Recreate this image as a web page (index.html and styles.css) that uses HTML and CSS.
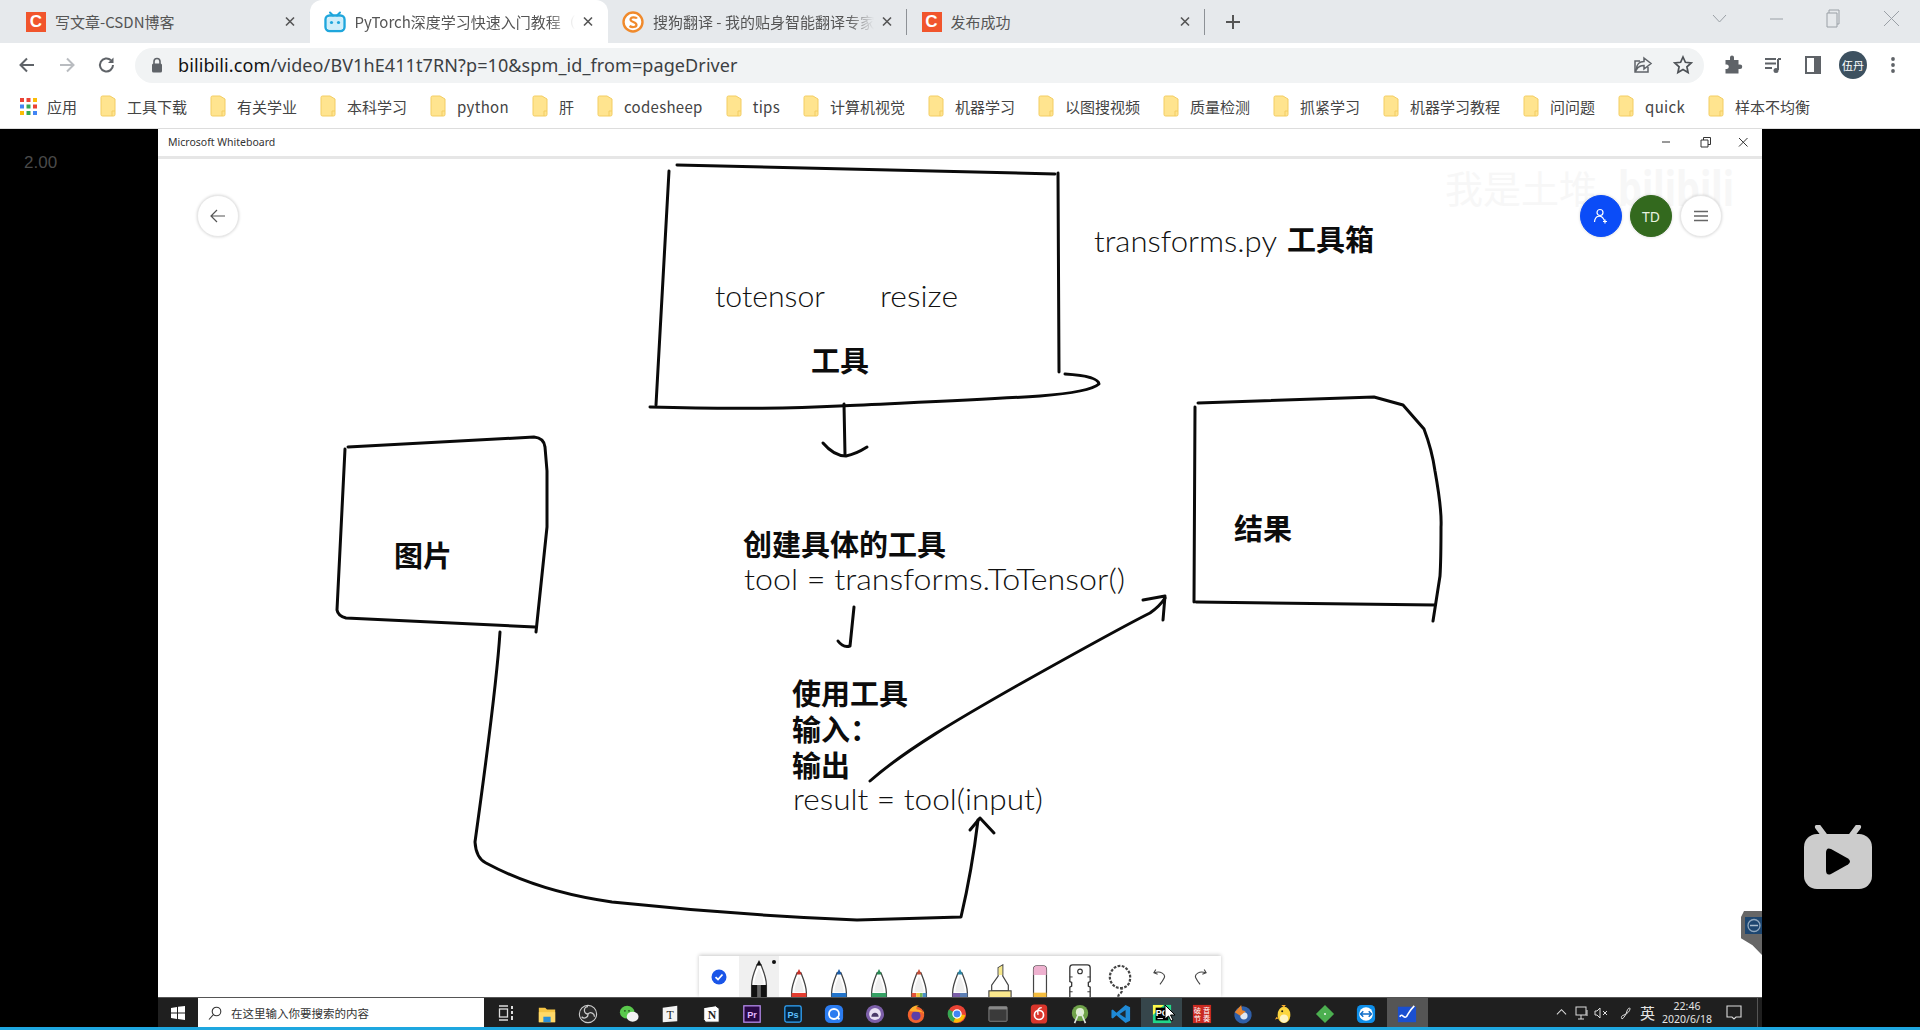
FILE: index.html
```html
<!DOCTYPE html>
<html lang="zh-CN">
<head>
<meta charset="utf-8">
<title>PyTorch深度学习快速入门教程</title>
<link rel="stylesheet" href="styles.css">
</head>
<body>
<svg class="defs" width="0" height="0">
  <defs>
    <symbol id="pen-body" viewBox="0 0 20 40">
      <path d="M2 40V27C2 19 6 10 8 5h4c2 5 6 14 6 22v13z" fill="#fff" stroke="#444" stroke-width="1.4"/>
      <path d="M5 26c0-6 3-13 5-17 2 4 5 11 5 17z" fill="#efefef"/>
    </symbol>
    <symbol id="folder" viewBox="0 0 16 22">
      <path d="M1 2.5A1.5 1.5 0 0 1 2.500 1H10l5 3v15.500a1.500 1.500 0 0 1-1.500 1.500h-11A1.500 1.500 0 0 1 1 19.500z" fill="#ffe48f" stroke="#f3cd63"/>
      <path d="M12 21v-5h3" fill="none" stroke="#f3cd63"/>
    </symbol>
  </defs>
</svg>

<header class="chrome">
  <div class="tabstrip">
    <div class="tab">
      <span class="fav fav-csdn">C</span>
      <span class="tab-title">写文章-CSDN博客</span>
      <svg class="tab-x" viewBox="0 0 10 10"><path d="M1 1l8 8M9 1l-8 8"/></svg>
    </div>
    <div class="tab tab-active">
      <svg class="fav-svg" viewBox="0 0 22 22"><path d="M6 1.500l3 3M16 1.500l-3 3" stroke="#1fa6dc" stroke-width="2" stroke-linecap="round"/><rect x="1.500" y="4.500" width="19" height="15.500" rx="4" fill="none" stroke="#1fa6dc" stroke-width="2.400"/><rect x="3" y="6" width="16" height="12.500" rx="3" fill="#cfeefa"/><circle cx="7.500" cy="11.500" r="1.600" fill="#1fa6dc"/><circle cx="14.500" cy="11.500" r="1.600" fill="#1fa6dc"/></svg>
      <span class="tab-title tab-fade">PyTorch深度学习快速入门教程（</span>
      <svg class="tab-x" viewBox="0 0 10 10"><path d="M1 1l8 8M9 1l-8 8"/></svg>
    </div>
    <div class="tab tab-sep">
      <svg class="fav-svg" viewBox="0 0 22 22"><circle cx="11" cy="11" r="9.500" fill="#fff" stroke="#f08a2c" stroke-width="2.400"/><path d="M15 7.500c-1-1.500-6.500-2-6.500 1 0 3 6 2 6 5.500 0 2.500-5 2.500-7 1" fill="none" stroke="#f08a2c" stroke-width="2.200"/></svg>
      <span class="tab-title tab-fade">搜狗翻译 - 我的贴身智能翻译专家</span>
      <svg class="tab-x" viewBox="0 0 10 10"><path d="M1 1l8 8M9 1l-8 8"/></svg>
    </div>
    <div class="tab tab-sep">
      <span class="fav fav-csdn">C</span>
      <span class="tab-title">发布成功</span>
      <svg class="tab-x" viewBox="0 0 10 10"><path d="M1 1l8 8M9 1l-8 8"/></svg>
    </div>
    <svg class="newtab" viewBox="0 0 16 16"><path d="M8 1v14M1 8h14"/></svg>
    <svg class="winctl" viewBox="1710 0 190 43">
      <path d="M1713 15l6.500 7 6.500-7M1770 19h13M1827 13v14h10V13zM1829 13v-3h10v14h-2M1884 11l15 15M1899 11l-15 15" fill="none" stroke="#9aa0a6" stroke-width="1"/>
    </svg>
  </div>

  <div class="toolbar">
    <div class="nav">
      <svg class="nav-ic" viewBox="0 0 20 20"><path d="M17 10H4M10 3.500L3.500 10l6.500 6.500" fill="none" stroke="#5f6368" stroke-width="2"/></svg>
      <svg class="nav-ic" viewBox="0 0 20 20"><path d="M3 10h13M10 3.500l6.500 6.500-6.500 6.500" fill="none" stroke="#b9bcc0" stroke-width="2"/></svg>
      <svg class="nav-ic" viewBox="0 0 20 20"><path d="M16 10a6.500 6.500 0 1 1-2-4.700" fill="none" stroke="#5f6368" stroke-width="2"/><path d="M16.500 2.500v5.500H11z" fill="#5f6368"/></svg>
    </div>
    <div class="omnibox">
      <svg class="lock" viewBox="0 0 12 16"><path d="M3 7V4.500a3 3 0 0 1 6 0V7" fill="none" stroke="#5f6368" stroke-width="1.600"/><rect x="1" y="6.500" width="10" height="9" rx="1.500" fill="#5f6368"/></svg>
      <span class="url"><b>bilibili.com</b>/video/BV1hE411t7RN?p=10&amp;spm_id_from=pageDriver</span>
      <svg class="omni-ic" viewBox="0 0 20 20"><path d="M11 3l7 5.500-7 5.500v-3.500c-4 0-6 1.500-7.500 4 0-5 3-8 7.500-8zM15 12v5H2V6h5" fill="none" stroke="#5f6368" stroke-width="1.500"/></svg>
      <svg class="omni-ic" viewBox="0 0 20 20"><path d="M10 2l2.400 5.300 5.800.6-4.300 3.900 1.200 5.700-5.100-2.900-5.100 2.900 1.200-5.700L1.800 7.900l5.800-.6z" fill="none" stroke="#4d5156" stroke-width="1.700"/></svg>
    </div>
    <div class="tools">
      <svg class="tool-ic" viewBox="0 0 20 20"><path d="M7 2.500a2 2 0 0 1 4 0V5h4.500v4.500h1.500a2.200 2.200 0 0 1 0 4.500h-1.500v4.500H2.500V14h1.500a2.300 2.300 0 0 0 0-4.500H2.500V5H7z" fill="#5f6368"/></svg>
      <svg class="tool-ic" viewBox="0 0 20 20"><path d="M2 4h11M2 8.500h11M2 13h7" stroke="#5f6368" stroke-width="2"/><path d="M15 4v11" stroke="#5f6368" stroke-width="2"/><path d="M15 4h3" stroke="#5f6368" stroke-width="2"/><circle cx="13" cy="15.500" r="2.500" fill="#5f6368"/></svg>
      <svg class="tool-ic" viewBox="0 0 20 20"><rect x="3" y="2" width="14" height="16" fill="none" stroke="#5f6368" stroke-width="2"/><rect x="11" y="2" width="6" height="16" fill="#5f6368"/></svg>
      <span class="avatar">伍丹</span>
      <svg class="tool-ic" viewBox="0 0 20 20"><circle cx="10" cy="4" r="1.900" fill="#5f6368"/><circle cx="10" cy="10" r="1.900" fill="#5f6368"/><circle cx="10" cy="16" r="1.900" fill="#5f6368"/></svg>
    </div>
  </div>

  <nav class="bookmarks">
    <div class="bm">
      <svg class="apps" viewBox="0 0 17 17">
        <rect x="0" y="0" width="4" height="4" fill="#ea4335"/><rect x="6.500" y="0" width="4" height="4" fill="#ea4335"/><rect x="13" y="0" width="4" height="4" fill="#fbbc05"/>
        <rect x="0" y="6.500" width="4" height="4" fill="#4285f4"/><rect x="6.500" y="6.500" width="4" height="4" fill="#34a853"/><rect x="13" y="6.500" width="4" height="4" fill="#ea4335"/>
        <rect x="0" y="13" width="4" height="4" fill="#fbbc05"/><rect x="6.500" y="13" width="4" height="4" fill="#34a853"/><rect x="13" y="13" width="4" height="4" fill="#4285f4"/>
      </svg>
      <span>应用</span>
    </div>
    <div class="bm"><svg class="fold"><use href="#folder"/></svg><span>工具下载</span></div>
    <div class="bm"><svg class="fold"><use href="#folder"/></svg><span>有关学业</span></div>
    <div class="bm"><svg class="fold"><use href="#folder"/></svg><span>本科学习</span></div>
    <div class="bm"><svg class="fold"><use href="#folder"/></svg><span class="lat">python</span></div>
    <div class="bm"><svg class="fold"><use href="#folder"/></svg><span>肝</span></div>
    <div class="bm"><svg class="fold"><use href="#folder"/></svg><span class="lat">codesheep</span></div>
    <div class="bm"><svg class="fold"><use href="#folder"/></svg><span class="lat">tips</span></div>
    <div class="bm"><svg class="fold"><use href="#folder"/></svg><span>计算机视觉</span></div>
    <div class="bm"><svg class="fold"><use href="#folder"/></svg><span>机器学习</span></div>
    <div class="bm"><svg class="fold"><use href="#folder"/></svg><span>以图搜视频</span></div>
    <div class="bm"><svg class="fold"><use href="#folder"/></svg><span>质量检测</span></div>
    <div class="bm"><svg class="fold"><use href="#folder"/></svg><span>抓紧学习</span></div>
    <div class="bm"><svg class="fold"><use href="#folder"/></svg><span>机器学习教程</span></div>
    <div class="bm"><svg class="fold"><use href="#folder"/></svg><span>问问题</span></div>
    <div class="bm"><svg class="fold"><use href="#folder"/></svg><span class="lat">quick</span></div>
    <div class="bm"><svg class="fold"><use href="#folder"/></svg><span>样本不均衡</span></div>
  </nav>
</header>

<main class="video">
  <aside class="side side-left"><span class="speed">2.00</span></aside>

  <section class="screen">
    <div class="wb-title">
      <span class="wb-name">Microsoft Whiteboard</span>
      <svg class="wb-ctl" viewBox="1650 129 112 27">
        <path d="M1662 142h8M1701 140h7v7h-7zM1703.500 140v-2.500h7v7h-2.500M1739 138l8.500 8.500M1747.500 138l-8.500 8.500" fill="none" stroke="#333" stroke-width="1"/>
      </svg>
    </div>

    <div class="canvas">
      <svg class="board" viewBox="158 159 1604 838">
        <!-- watermark -->
        <text class="mark" x="1445" y="203">我是土堆</text>
        <text class="mark mark-b" x="1618" y="206" textLength="116" lengthAdjust="spacingAndGlyphs">bilibili</text>

        <!-- tool box -->
        <g class="ink">
          <path d="M677 165L1055 174"/>
          <path d="M1058 173L1059 372"/>
          <path d="M669 171L656 405"/>
          <path d="M650 407Q760 410 839 406C900 403 980 400 1040 396Q1090 392 1099 384Q1098 376 1065 374"/>
          <path d="M844 404L845 455"/>
          <path d="M823 443Q834 456 846 456Q856 454 867 447"/>

          <!-- left box -->
          <path d="M348 447L534 437Q544 438 545 447L547 471L547 527L536 632"/>
          <path d="M345 449L337 610Q338 616 346 618L535 627"/>
          <path d="M500 632C497 680 485 770 475 842Q476 858 486 863Q540 892 612 902Q735 915 857 920L961 917Q972 870 978 820"/>
          <path d="M970 830L980 818L994 833"/>

          <!-- right box -->
          <path d="M1198 403L1374 397L1403 405L1424 429Q1432 450 1435 471Q1442 510 1441 527Q1441 560 1440 576L1433 621"/>
          <path d="M1195 407L1194 602"/>
          <path d="M1196 602L1435 605"/>

          <!-- arrows -->
          <path d="M854 607L850 646Q843 648 838 641"/>
          <path d="M870 781C905 750 960 718 1020 684C1070 656 1120 628 1150 613Q1160 606 1165 598"/>
          <path d="M1143 600L1165 596L1163 620"/>
        </g>

        <text class="hand" x="1094" y="252" textLength="183" lengthAdjust="spacingAndGlyphs">transforms.py</text>
        <text class="cn" x="1287" y="251">工具箱</text>
        <text class="hand" x="715" y="307" textLength="110" lengthAdjust="spacingAndGlyphs">totensor</text>
        <text class="hand" x="880" y="307" textLength="78" lengthAdjust="spacingAndGlyphs">resize</text>
        <text class="cn" x="811" y="372">工具</text>
        <text class="cn" x="394" y="567">图片</text>
        <text class="cn" x="1234" y="540">结果</text>
        <text class="cn" x="743" y="556">创建具体的工具</text>
        <text class="hand" x="744" y="590" textLength="381" lengthAdjust="spacingAndGlyphs">tool = transforms.ToTensor()</text>
        <text class="cn" x="792" y="705">使用工具</text>
        <text class="cn" x="792" y="741">输入：</text>
        <text class="cn" x="792" y="777">输出</text>
        <text class="hand" x="793" y="810" textLength="250" lengthAdjust="spacingAndGlyphs">result = tool(input)</text>
      </svg>

      <button class="round round-back">
        <svg class="round-ic" viewBox="0 0 16 16"><path d="M15 8H1M7 2L1 8l6 6" fill="none" stroke="#555" stroke-width="1.200"/></svg>
      </button>
      <div class="round-group">
        <span class="round round-blue">
          <svg class="round-ic" viewBox="0 0 16 16"><circle cx="7" cy="4.500" r="3" fill="none" stroke="#fff" stroke-width="1.200"/><path d="M1.500 14c.5-6 5-7 8-4.500l2 3M12 11.500v4M10 13.500h4" fill="none" stroke="#fff" stroke-width="1.200"/></svg>
        </span>
        <span class="round round-green">TD</span>
        <span class="round round-menu">
          <svg class="round-ic" viewBox="0 0 16 16"><path d="M1 3.500h14M1 8h14M1 12.500h14" stroke="#666" stroke-width="1.400"/></svg>
        </span>
      </div>

      <div class="tv-tab">
        <svg class="tv-ic" viewBox="0 0 17 17"><rect width="17" height="17" fill="#1d4670"/><circle cx="9" cy="8.500" r="6" fill="none" stroke="#8fa6bc" stroke-width="1.300"/><path d="M5 8.500h8" stroke="#a9bbcc" stroke-width="1.400"/></svg>
      </div>

      <div class="pens">
        <svg class="p-check" viewBox="0 0 16 16"><circle cx="8" cy="8" r="7.500" fill="#1a55e8"/><path d="M4.500 8.200l2.500 2.300 4.500-5" fill="none" stroke="#fff" stroke-width="1.800"/></svg>
        <div class="p-slot p-active">
          <svg class="pen" viewBox="0 0 20 40"><use href="#pen-body"/><path d="M10 0l3 6H7z" fill="#111"/><rect x="2" y="27" width="16" height="13" fill="#111"/><rect x="8" y="27" width="4" height="13" fill="#666"/></svg>
          <i class="p-dot"></i>
        </div>
        <div class="p-slot"><svg class="pen pen-low" viewBox="0 0 20 40"><use href="#pen-body"/><path d="M10 1l3 6H7z" fill="#c8322a"/><rect x="2" y="27" width="16" height="13" fill="#e43d30"/></svg></div>
        <div class="p-slot"><svg class="pen pen-low" viewBox="0 0 20 40"><use href="#pen-body"/><path d="M10 1l3 6H7z" fill="#1d5ea8"/><rect x="2" y="27" width="16" height="13" fill="#2375cc"/></svg></div>
        <div class="p-slot"><svg class="pen pen-low" viewBox="0 0 20 40"><use href="#pen-body"/><path d="M10 1l3 6H7z" fill="#2a8a55"/><rect x="2" y="27" width="16" height="13" fill="#36a265"/></svg></div>
        <div class="p-slot"><svg class="pen pen-low" viewBox="0 0 20 40"><use href="#pen-body"/><path d="M10 1l3 6H7z" fill="#c4503a"/><rect x="2" y="27" width="5" height="13" fill="#e5533a"/><rect x="7" y="27" width="4" height="13" fill="#f3c440"/><rect x="11" y="27" width="3" height="13" fill="#76b852"/><rect x="14" y="27" width="4" height="13" fill="#4a90c8"/></svg></div>
        <div class="p-slot"><svg class="pen pen-low" viewBox="0 0 20 40"><use href="#pen-body"/><path d="M10 1l3 6H7z" fill="#2d88a8"/><rect x="2" y="27" width="8" height="13" fill="#7b5ea8"/><rect x="10" y="27" width="8" height="13" fill="#5c7fb5"/></svg></div>
        <div class="p-slot"><svg class="pen pen-wide" viewBox="0 0 28 40"><path d="M12 4l5-3v12l6 10v6H5v-6l7-10z" fill="#fff" stroke="#444" stroke-width="1.300"/><path d="M12.500 4l4-2.500V12h-4z" fill="#f6e88a"/><rect x="2" y="29" width="24" height="11" fill="#fbe88d" stroke="#444" stroke-width="1.200"/></svg></div>
        <div class="p-slot"><svg class="pen pen-tool" viewBox="0 0 20 40"><path d="M3 40V6q0-4 4-4h6q4 0 4 4v34z" fill="#fff" stroke="#444" stroke-width="1.300"/><path d="M3 12V6q0-4 4-4h6q4 0 4 4v6z" fill="#eeb1cf"/><rect x="3" y="31" width="14" height="9" fill="#f5bd3e"/></svg></div>
        <div class="p-slot"><svg class="pen pen-wide" viewBox="0 0 28 40"><path d="M6 1h16q3 0 3 3v15l-2 1v4l2 1v15H3V25l2-1v-4l-2-1V4q0-3 3-3z" fill="#fff" stroke="#333" stroke-width="1.400"/><circle cx="14" cy="8" r="2.500" fill="none" stroke="#333" stroke-width="1.200"/><path d="M3 14h3M3 30h3M25 14h-3M25 30h-3" stroke="#333"/></svg></div>
        <div class="p-slot"><svg class="pen pen-wide" viewBox="0 0 28 40"><path d="M14 26c9 0 11-6 11-12S20 2 14 2 3 8 3 14s5 12 11 12c3 0 3 4 0 6s-2 6 0 8" fill="none" stroke="#444" stroke-width="2.400" stroke-dasharray="3 1.500"/></svg></div>
        <div class="p-slot"><svg class="p-undo" viewBox="0 0 14 18"><path d="M3 1L1 4.500 5 6M1.500 4.500C8 2 14 6 12 10c-1 2-3 5-4.500 7" fill="none" stroke="#444" stroke-width="1.200"/></svg></div>
        <div class="p-slot"><svg class="p-undo" viewBox="0 0 14 18"><path d="M11 1l2 3.500L9 6M12.500 4.500C6 2 0 6 2 10c1 2 3 5 4.500 7" fill="none" stroke="#444" stroke-width="1.200"/></svg></div>
      </div>
    </div>

    <footer class="taskbar">
      <div class="start">
        <svg class="win" viewBox="0 0 14 14"><path d="M0 2l6-1v5.500H0zM7 .8L14 0v6.500H7zM0 7.500h6V13l-6-1zM7 7.500h7V14l-7-1z" fill="#fff"/></svg>
      </div>
      <div class="search">
        <svg class="search-ic" viewBox="0 0 14 14"><circle cx="8.500" cy="5.500" r="4.300" fill="none" stroke="#333" stroke-width="1.100"/><path d="M5.500 8.500L1 13.500" stroke="#333" stroke-width="1.100"/></svg>
        <span>在这里输入你要搜索的内容</span>
      </div>
      <div class="taskview">
        <svg class="ti" viewBox="0 0 20 20"><path d="M3 3h9M3 17h9" stroke="#ddd" stroke-width="1.400"/><rect x="3.500" y="6" width="8" height="8" fill="none" stroke="#ddd" stroke-width="1.300"/><path d="M16 3v3M16 8v3M16 13v4" stroke="#ddd" stroke-width="2"/></svg>
      </div>
      <div class="apps-row">
        <span class="app"><svg class="ti" viewBox="0 0 22 22"><path d="M2 4h7l2 2h9v14H2z" fill="#f6c544"/><rect x="2" y="9" width="18" height="11" fill="#ffd968"/><rect x="7" y="14" width="8" height="6" fill="#2a8fd8"/></svg></span>
        <span class="app"><svg class="ti" viewBox="0 0 22 22"><circle cx="11" cy="11" r="9.500" fill="#2c2c2c" stroke="#ccc" stroke-width="1.200"/><path d="M11 3a4 4 0 0 0 0 8M18 14a4 4 0 0 0-7-3M4 14a4 4 0 0 0 7-3" fill="none" stroke="#ccc" stroke-width="1.400"/></svg></span>
        <span class="app"><svg class="ti" viewBox="0 0 22 22"><ellipse cx="9" cy="9" rx="8" ry="7" fill="#5ac84c"/><ellipse cx="15" cy="14" rx="6.500" ry="5.500" fill="#f2f2f2"/><circle cx="6.500" cy="7.500" r="1" fill="#24551d"/><circle cx="11" cy="7.500" r="1" fill="#24551d"/></svg></span>
        <span class="app"><svg class="ti" viewBox="0 0 22 22"><path d="M3 4l16-2v17l-16 1z" fill="#f3f3f3"/><text class="ti-t ti-dark" x="11" y="16" text-anchor="middle">T</text></svg></span>
        <span class="app"><svg class="ti" viewBox="0 0 22 22"><path d="M3 4l13-2 4 3v15H5l-2-3z" fill="#fff" stroke="#111"/><text class="ti-t ti-dark ti-bold" x="12" y="16" text-anchor="middle">N</text></svg></span>
        <span class="app"><svg class="ti" viewBox="0 0 22 22"><rect x="2" y="2" width="18" height="18" fill="#2a0845" stroke="#b88cf0" stroke-width="1.400"/><text class="ti-t ti-sm ti-pr" x="11" y="15" text-anchor="middle">Pr</text></svg></span>
        <span class="app"><svg class="ti" viewBox="0 0 22 22"><rect x="2" y="2" width="18" height="18" rx="2" fill="#04233c" stroke="#31a8ff" stroke-width="1.400"/><text class="ti-t ti-sm ti-ps" x="11" y="15" text-anchor="middle">Ps</text></svg></span>
        <span class="app"><svg class="ti" viewBox="0 0 22 22"><rect x="1" y="1" width="20" height="20" rx="6" fill="#2b7cf0"/><circle cx="11" cy="11" r="5.500" fill="none" stroke="#fff" stroke-width="2"/><path d="M14 14l3 3" stroke="#fff" stroke-width="2"/></svg></span>
        <span class="app"><svg class="ti" viewBox="0 0 22 22"><circle cx="11" cy="11" r="10" fill="#7c5fa8"/><circle cx="11" cy="11" r="6.500" fill="#e8e0f2"/><path d="M7 14c0-6 8-6 8 0z" fill="#4a3a68"/></svg></span>
        <span class="app"><svg class="ti" viewBox="0 0 22 22"><circle cx="11" cy="12" r="9" fill="#f2622e"/><circle cx="11" cy="13" r="5" fill="#5b3fa8"/><path d="M4 8c2-6 8-7 10-6-3 1-3 3-2 4 4 0 6 3 6 3l2 2-1-6 1 4z" fill="#ffb02e"/></svg></span>
        <span class="app"><svg class="ti" viewBox="0 0 22 22"><circle cx="11" cy="11" r="10" fill="#ea4335"/><path d="M11 11L2 6a10 10 0 0 0 5 14z" fill="#34a853"/><path d="M11 11l-4 9a10 10 0 0 0 13-8z" fill="#fbbc05"/><circle cx="11" cy="11" r="4.500" fill="#4285f4" stroke="#fff" stroke-width="1.400"/></svg></span>
        <span class="app"><svg class="ti" viewBox="0 0 22 22"><rect x="1" y="3" width="20" height="16" rx="1" fill="#3a3a3a" stroke="#888"/><rect x="1" y="3" width="20" height="3" fill="#888"/></svg></span>
        <span class="app"><svg class="ti" viewBox="0 0 22 22"><rect x="2" y="0.500" width="18" height="21" rx="4" fill="#d9352b"/><circle cx="11" cy="12" r="5" fill="none" stroke="#fff" stroke-width="1.800"/><path d="M14 4c-4 0-5 3-4 8" fill="none" stroke="#fff" stroke-width="1.500"/></svg></span>
        <span class="app"><svg class="ti" viewBox="0 0 22 22"><circle cx="11" cy="10" r="9" fill="#6fa24a"/><circle cx="11" cy="9" r="4.500" fill="#dff0cf"/><path d="M5 21l6-14 6 14" fill="none" stroke="#dfe7e0" stroke-width="1.800"/></svg></span>
        <span class="app"><svg class="ti" viewBox="0 0 22 22"><path d="M16 1l5 2.500v15L16 21 6 12.500 2 16l-1.500-1V7L2 6l4 3.500z" fill="#1f8ad6"/><path d="M16 6.500L9.500 11l6.500 4.500z" fill="#1f2a33"/></svg></span>
        <span class="app app-pc"><svg class="ti" viewBox="0 0 22 22"><rect x="1" y="1" width="20" height="20" fill="#21d789"/><path d="M1 1h12L1 12z" fill="#fcf84a"/><rect x="4" y="4" width="14" height="14" fill="#000"/><text class="ti-t ti-sm ti-w" x="11" y="13" text-anchor="middle">PC</text><path d="M6 16h6" stroke="#fff"/></svg></span>
        <span class="app"><svg class="ti" viewBox="0 0 22 22"><rect x="1" y="1" width="20" height="20" fill="#c92a20"/><text class="ti-t ti-xs" x="6" y="10" text-anchor="middle">破</text><text class="ti-t ti-xs" x="16" y="10" text-anchor="middle">音</text><text class="ti-t ti-xs" x="6" y="19" text-anchor="middle">节</text><text class="ti-t ti-xs" x="16" y="19" text-anchor="middle">奏</text></svg></span>
        <span class="app"><svg class="ti" viewBox="0 0 22 22"><circle cx="11" cy="12" r="9.500" fill="#2f5fa8"/><circle cx="12" cy="13" r="4" fill="#dfe7f2"/><path d="M2 9l7-8 1 6 4 1-6 5z" fill="#e8842c"/></svg></span>
        <span class="app"><svg class="ti" viewBox="0 0 22 22"><ellipse cx="11" cy="12" rx="7" ry="9" fill="#fcd53f"/><ellipse cx="11" cy="16" rx="4.500" ry="4.500" fill="#fff4c4"/><circle cx="9" cy="8" r="1.100" fill="#222"/><path d="M3 14l-2 3 4-1zM8 1l3 3 2-3" fill="#f3a92c"/></svg></span>
        <span class="app"><svg class="ti" viewBox="0 0 22 22"><path d="M11 1l10 10-10 10L1 11z" fill="#4caf50"/><circle cx="11" cy="11" r="1.200" fill="#e9f5e9"/></svg></span>
        <span class="app"><svg class="ti" viewBox="0 0 22 22"><rect x="1" y="1" width="20" height="20" rx="5" fill="#0e8ee9"/><circle cx="11" cy="11" r="7.500" fill="#fff"/><path d="M5 11h12M8 8l-3 3 3 3M14 8l3 3-3 3" fill="none" stroke="#0e6ec9" stroke-width="1.600"/></svg></span>
        <span class="app app-wb"><svg class="ti" viewBox="0 0 22 22"><rect x="1" y="3" width="20" height="17" fill="#1a4fd0"/><path d="M3 14c3-5 5 4 8-1s3-6 8-11" fill="none" stroke="#fff" stroke-width="1.800"/></svg></span>
        <svg class="cursor" viewBox="0 0 12 18"><path d="M1 1v14l3.500-3 2.500 5 2-1-2.500-5H11z" fill="#fff" stroke="#000"/></svg>
      </div>
      <div class="tray">
        <svg class="tr tr-up" viewBox="0 0 12 12"><path d="M1 8l5-5 5 5" fill="none" stroke="#ddd" stroke-width="1.100"/></svg>
        <svg class="tr tr-net" viewBox="0 0 14 14"><rect x="1" y="1" width="10" height="8" fill="none" stroke="#ddd"/><path d="M6 9v4M3 13h6M12 4v6" stroke="#ddd"/></svg>
        <svg class="tr tr-vol" viewBox="0 0 14 14"><path d="M1 5h2l3-3v10L3 9H1zM9 5l4 4M13 5l-4 4" fill="none" stroke="#ddd"/></svg>
        <svg class="tr tr-pen" viewBox="0 0 14 14"><path d="M3 13c3-2 4-5 5-8s3-4 3-2-3 5-6 6-3 2-2 4z" fill="none" stroke="#ddd"/></svg>
        <span class="ime">英</span>
        <div class="clock"><span>22:46</span><span>2020/6/18</span></div>
        <svg class="tr tr-n" viewBox="0 0 16 16"><path d="M1 1h14v11H10l-2 2-2-2H1z" fill="none" stroke="#ddd" stroke-width="1.100"/></svg>
      </div>
    </footer>
  </section>

  <aside class="side side-right">
    <svg class="bili" viewBox="0 0 68 64">
      <path d="M20 10L14 2M48 10l6-8" stroke="#ccc" stroke-width="6" stroke-linecap="round"/>
      <rect x="0" y="9" width="68" height="55" rx="13" fill="#ccc"/>
      <path d="M22 28q0-6 5-4l17 9.500q4 3 0 6l-17 9.500q-5 2-5-4z" fill="#000"/>
    </svg>
  </aside>
</main>
<div class="bluebar"></div>
</body>
</html>
```

FILE: styles.css
```css
* { box-sizing: border-box; }
html, body { margin: 0; padding: 0; }
body {
  width: 1920px;
  height: 1030px;
  overflow: hidden;
  display: flex;
  flex-direction: column;
  background: #000;
  font-family: "Noto Sans CJK SC", "Noto Sans", sans-serif;
}
.defs { position: absolute; }

/* browser chrome */
.chrome { flex: none; height: 129px; background: #fff; border-bottom: 1px solid #ddd; }
.tabstrip {
  height: 43px;
  background: #e6e9ec;
  display: flex;
  align-items: center;
  padding-left: 11px;
}
.tab {
  width: 298.500px;
  height: 43px;
  flex: none;
  display: flex;
  align-items: center;
  padding: 0 15px;
  color: #555;
  font-size: 15px;
  position: relative;
}
.tab-active { background: #fff; border-radius: 12px 12px 0 0; }
.tab-sep::after {
  content: "";
  position: absolute;
  right: 0;
  top: 9px;
  height: 26px;
  width: 1px;
  background: #8d9196;
}
.fav {
  width: 20px;
  height: 20px;
  flex: none;
  background: #f1552c;
  color: #fff;
  font: bold 17px/20px "Liberation Sans", sans-serif;
  text-align: center;
}
.fav-svg { width: 22px; height: 22px; flex: none; margin-left: -1px; }
.tab-title {
  flex: 1;
  margin-left: 9px;
  white-space: nowrap;
  overflow: hidden;
}
.tab-fade {
  -webkit-mask-image: linear-gradient(90deg, #000 88%, transparent 100%);
  mask-image: linear-gradient(90deg, #000 88%, transparent 100%);
}
.tab-x {
  width: 10px;
  height: 11px;
  flex: none;
  margin-left: 8px;
  fill: none;
  stroke: #555;
  stroke-width: 1.600;
}
.newtab { width: 16px; height: 16px; flex: none; margin-left: 20px; fill: none; stroke: #555; stroke-width: 2; }
.winctl { width: 190px; height: 43px; flex: none; margin-left: auto; margin-right: 20px; }

.toolbar { height: 44px; display: flex; align-items: center; }
.nav { display: flex; padding-left: 7px; flex: none; }
.nav-ic { width: 20px; height: 20px; margin: 0 10px; }
.omnibox {
  width: 1569px;
  height: 35px;
  margin-left: 8px;
  flex: none;
  background: #f1f3f4;
  border-radius: 18px;
  display: flex;
  align-items: center;
  padding: 0 11px 0 16px;
}
.lock { width: 12px; height: 16px; flex: none; }
.url {
  margin-left: 15px;
  flex: 1;
  font: 18px/24px "Noto Sans", sans-serif;
  letter-spacing: .1px;
  color: #3c4043;
  white-space: nowrap;
}
.url b { font-weight: 400; color: #111; }
.omni-ic { width: 20px; height: 20px; flex: none; margin-left: 20px; }
.tools { display: flex; align-items: center; flex: none; margin-left: 9px; }
.tool-ic { width: 20px; height: 20px; margin: 0 10px; flex: none; }
.avatar {
  width: 28px;
  height: 28px;
  margin: 0 6px;
  border-radius: 50%;
  background: #3d5160;
  color: #fff;
  font-size: 11px;
  line-height: 28px;
  text-align: center;
  flex: none;
}

.bookmarks {
  height: 41px;
  display: flex;
  align-items: center;
  gap: 23px;
  padding: 0 0 3px 20px;
  font-size: 15px;
  color: #444;
  white-space: nowrap;
}
.bm { display: flex; align-items: center; gap: 11px; flex: none; }
.lat { letter-spacing: .3px; }
.apps { width: 17px; height: 17px; flex: none; margin-right: -1px; }
.fold { width: 16px; height: 22px; flex: none; }

/* video area */
.video { flex: 1; display: flex; min-height: 0; }
.side { flex: none; width: 158px; background: #000; }
.side-left { padding: 20px 0 0 24px; }
.speed { color: #4a4a4a; font: 17px/24px "Liberation Sans", sans-serif; }
.side-right { padding: 696px 0 0 42px; }
.bili { width: 68px; height: 64px; display: block; }

.screen { flex: 1; display: flex; flex-direction: column; background: #fff; }
.wb-title {
  flex: none;
  height: 30px;
  display: flex;
  align-items: center;
  justify-content: space-between;
  padding-left: 10px;
  background: #fff;
  border-bottom: 3px solid #e6e6e6;
}
.wb-name { font: 10.500px/14px "Noto Sans", sans-serif; color: #333; margin-bottom: 2px; }
.wb-ctl { width: 112px; height: 27px; flex: none; }

.canvas { flex: 1; position: relative; overflow: hidden; }
.board { display: block; width: 100%; height: 100%; }
.ink path { fill: none; stroke: #0a0a0a; stroke-width: 3; stroke-linecap: round; stroke-linejoin: round; }
.hand { font-family: "Lato", sans-serif; font-weight: 300; font-size: 30px; fill: #111; }
.cn { font-family: "Noto Sans CJK SC", sans-serif; font-weight: 700; font-size: 29px; fill: #0c0c0c; }
.mark { font-family: "Noto Sans CJK SC", sans-serif; font-size: 38px; fill: #f7f7f7; }
.mark-b { font-family: "Noto Sans", sans-serif; font-weight: 700; font-size: 48px; }

.round {
  width: 42px;
  height: 42px;
  border-radius: 50%;
  display: flex;
  align-items: center;
  justify-content: center;
  padding: 0;
  border: 1px solid #e8e8e8;
  background: #fff;
  box-shadow: 0 0 3px rgba(0, 0, 0, .18);
}
.round-back { position: absolute; left: 39px; top: 36px; }
.round-ic { width: 16px; height: 16px; }
.round-group { position: absolute; left: 1422px; top: 36px; display: flex; gap: 8px; }
.round-blue { background: #0b4cf7; border-color: #0b4cf7; }
.round-green { background: #33691e; border-color: #33691e; color: #e8f2e0; font: 14px "Noto Sans", sans-serif; }
.round-menu { margin-left: 0; }

.tv-tab {
  position: absolute;
  right: 0;
  bottom: 42px;
  width: 21px;
  height: 44px;
  background: #666;
  clip-path: polygon(3px 0, 100% 0, 100% 100%, 55% 78%, 0 62%, 0 6px);
  padding: 6px 0 0 4px;
}
.tv-ic { display: block; width: 17px; height: 17px; }

.pens {
  position: absolute;
  left: 541px;
  bottom: 0;
  width: 522px;
  height: 41px;
  display: flex;
  align-items: flex-end;
  background: #fff;
  box-shadow: 0 -1px 4px rgba(0, 0, 0, .22);
}
.p-check { width: 16px; height: 16px; flex: none; margin: 0 12px 12px; align-self: flex-end; }
.p-slot {
  width: 40.100px;
  height: 41px;
  flex: none;
  display: flex;
  justify-content: center;
  align-items: flex-end;
  position: relative;
}
.p-active { background: #f0f0f0; }
.p-dot { position: absolute; right: 3px; top: 4px; width: 4px; height: 4px; border-radius: 50%; background: #111; }
.pen { width: 20px; height: 37px; display: block; flex: none; }
.pen-low { margin-bottom: -8px; }
.pen-wide { width: 28px; height: 37px; margin-bottom: -4px; }
.pen-tool { margin-bottom: -4px; }
.p-undo { width: 13px; height: 18px; margin-bottom: 11px; }

/* taskbar */
.taskbar {
  flex: none;
  height: 30px;
  display: flex;
  align-items: stretch;
  background: #1f1f1f;
  border-top: 1px solid #555;
  color: #e5e5e5;
}
.start { width: 40px; display: flex; align-items: center; justify-content: center; flex: none; }
.win { width: 14px; height: 14px; }
.search {
  width: 286px;
  flex: none;
  display: flex;
  align-items: center;
  gap: 9px;
  padding-left: 10px;
  background: #fff;
  color: #333;
  font-size: 11.500px;
}
.search-ic { width: 14px; height: 14px; flex: none; }
.taskview { width: 43px; flex: none; display: flex; align-items: center; justify-content: center; }
.apps-row { display: flex; flex: none; position: relative; }
.app { width: 40.950px; flex: none; display: flex; align-items: center; justify-content: center; padding-top: 2px; }
.app-pc { background: #36464b; }
.app-wb { background: #555; }
.ti { width: 20px; height: 20px; display: block; flex: none; }
.ti-t { font: 13px "Liberation Serif", serif; }
.ti-dark { fill: #222; }
.ti-bold { font-weight: 700; }
.ti-sm { font: bold 10px "Liberation Sans", sans-serif; }
.ti-pr { fill: #e2b8ff; }
.ti-ps { fill: #5ec0ff; }
.ti-w { fill: #fff; }
.ti-xs { font: 8px "Noto Sans CJK SC", sans-serif; fill: #fff; }
.cursor { position: absolute; left: 637px; top: 6px; width: 12px; height: 18px; }
.tray {
  margin-left: auto;
  margin-right: 4px;
  padding-right: 15px;
  display: flex;
  align-items: center;
  flex: none;
  border-right: 1px solid #555;
}
.tr { width: 14px; height: 14px; flex: none; }
.tr-up { width: 11px; height: 11px; margin-right: 7.500px; }
.tr-net { margin-right: 5px; }
.tr-vol { margin-right: 11px; }
.tr-pen { margin-right: 7px; }
.tr-n { width: 16px; height: 16px; }
.ime { font-size: 15px; margin-right: 3px; }
.clock {
  display: flex;
  flex-direction: column;
  align-items: center;
  width: 58px;
  margin-right: 10px;
  font: 10.500px/13px "Noto Sans", sans-serif;
}
.bluebar { flex: none; height: 3px; background: #1ea7e0; }
```
